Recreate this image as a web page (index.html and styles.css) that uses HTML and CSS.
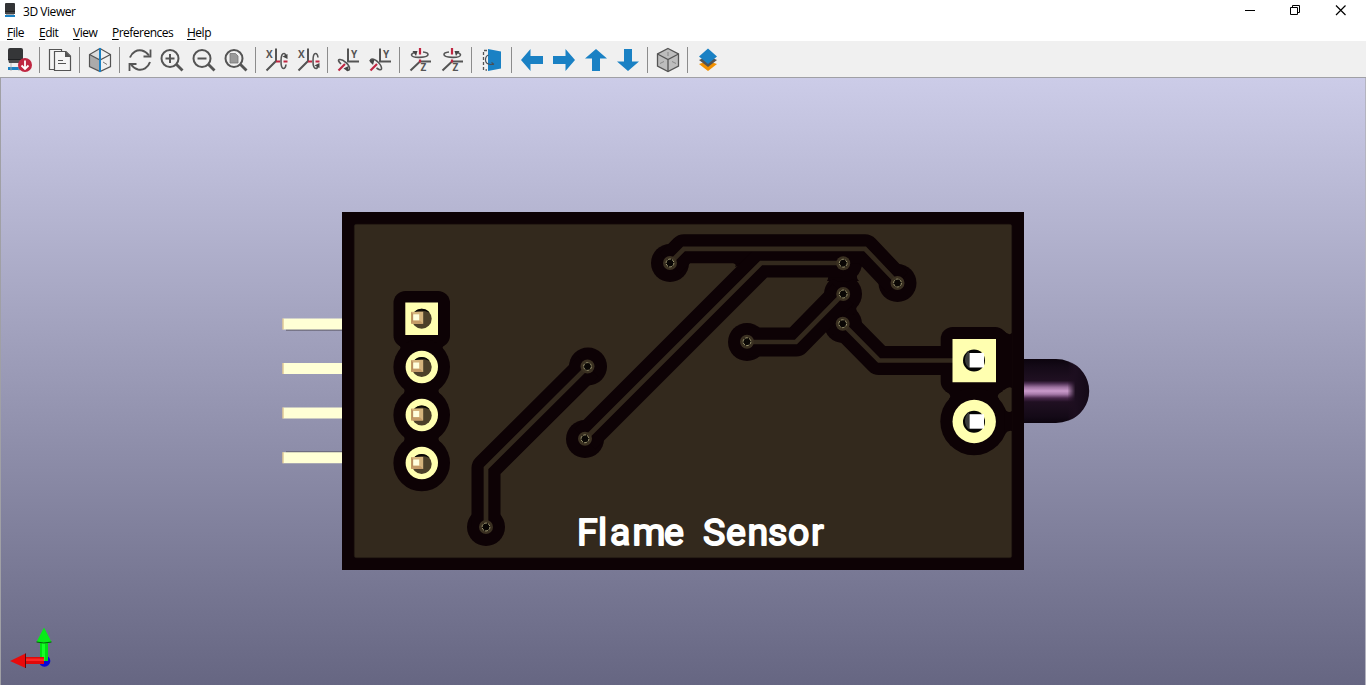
FILE: index.html
```html
<!DOCTYPE html>
<html lang="en">
<head>
<meta charset="utf-8">
<title>3D Viewer</title>
<link rel="stylesheet" href="styles.css">
</head>
<body>
<header class="titlebar">
  <svg class="app-icon" width="12" height="16" viewBox="0 0 12 16"><path d="M0 1q0-1 1-1h8q1 0 1 1v8H0z" fill="#333436"/><path d="M0 8h10v3H0z" fill="#444547"/><path d="M0 8.500h10" stroke="#1f2022"/><path d="M0 12h10v2H0z" fill="#1a81c4"/><path d="M1 11.500h8" stroke="#aaa"/></svg>
  <h1 class="title">3D Viewer</h1>
  <div class="window-controls">
    <svg width="46" height="20" viewBox="0 0 46 20"><path d="M20 10.500h10" stroke="#000"/></svg>
    <svg width="46" height="20" viewBox="0 0 46 20" fill="none" stroke="#000"><path d="M19.500 7.500h7v7h-7zM21.500 7.500v-2h7v7h-2"/></svg>
    <svg width="46" height="20" viewBox="0 0 46 20"><path d="M19 5.500l9.500 9.500M28.500 5.500L19 15" stroke="#000" stroke-width="1.200"/></svg>
  </div>
</header>
<nav class="menubar">
  <span><u>F</u>ile</span><span><u>E</u>dit</span><span><u>V</u>iew</span><span class="wide"><u>P</u>references</span><span><u>H</u>elp</span>
</nav>
<div class="toolbar">
  <svg class="tool" viewBox="0 0 32 32"><path d="M4 6q0-2 2-2h11q2 0 2 2v9H4z" fill="#353638"/><path d="M4 15h15l-1 4H5z" fill="#4a4b4d"/><path d="M4 15.500h15" stroke="#202123"/><path d="M4 23h15v3H4z" fill="#1a81c4"/><path d="M7 19v8M15 19v8" stroke="#aaa" stroke-width=".8"/><circle cx="21" cy="21" r="7" fill="#bf2641"/><path d="M21 16.500v8M17.500 21.500l3.500 3.500 3.500-3.500" fill="none" stroke="#fff" stroke-width="1.800"/></svg>
  <i class="sep"></i>
  <svg class="tool" viewBox="0 0 32 32"><path d="M11 25.500H5.500v-20h12V8" fill="#f5f5f5" stroke="#545454" stroke-width="1.200"/><path d="M10.500 7.500H22l4.500 4.500v14.500h-16z" fill="#f5f5f5" stroke="#545454" stroke-width="1.200"/><path d="M21 7l6 6h-6z" fill="#545454"/><path d="M14 16.500h5M14 19.500h8" stroke="#545454"/></svg>
  <i class="sep"></i>
  <svg class="tool" viewBox="0 0 32 32"><path d="M5.500 10.500L16 16v11.500L5.500 22.500z" fill="#ababab"/><path d="M5.500 10.500l10.500-6V16z" fill="#ddd"/><path d="M16 4.500l10.500 6v12L16 27.500l-10.500-5v-12zM5.500 10.500L16 16l10.500-5.500" fill="none" stroke="#545454" stroke-width="1.200"/><path d="M19 18l4 2.500" stroke="#777"/><path d="M16 4v24" stroke="#1a81c4" stroke-width="2"/></svg>
  <i class="sep"></i>
  <svg class="tool" viewBox="0 0 32 32" fill="none" stroke="#545454" stroke-width="2"><path d="M6 13.500C8 8 13 5.500 18 6.500q4 1 7 5M26 18c-2 6-7 8.500-12 7.500q-4-1-7-5"/><path d="M26.500 5.500v7h-7M5.500 27v-7h7" stroke-width="1.800"/></svg>
  <svg class="tool" viewBox="0 0 32 32" fill="none" stroke="#545454" stroke-width="2"><circle cx="14" cy="14.500" r="8.500"/><path d="M20.500 20.500l6 6" stroke-width="2.800"/><path d="M9.500 14.500h9M14 10v9"/></svg>
  <svg class="tool" viewBox="0 0 32 32" fill="none" stroke="#545454" stroke-width="2"><circle cx="14" cy="14.500" r="8.500"/><path d="M20.500 20.500l6 6" stroke-width="2.800"/><path d="M9.500 14.500h9"/></svg>
  <svg class="tool" viewBox="0 0 32 32" fill="none" stroke="#545454" stroke-width="2"><circle cx="14" cy="14.500" r="8.500"/><path d="M20.500 20.500l6 6" stroke-width="2.800"/><path d="M10 9.500h5.500l2.500 2.500v7h-8z" fill="#999" stroke="#777" stroke-width=".8"/></svg>
  <i class="sep"></i>
  <svg class="tool axis" viewBox="0 0 32 32"><path d="M16 4.500V17L6.500 26.500"/><path class="red" d="M16 17.500h4M23.500 17.500h4"/><path class="arc" d="M26 20.500q-.500 4-2.500 4-2.500 0-2.500-7.500t3-7.500q1.500 0 2 3"/><path class="head" d="M22.500 12.500l5-2.500v5z"/><text x="6" y="13.500">X</text></svg>
  <svg class="tool axis" viewBox="0 0 32 32"><path d="M16 4.500V17L6.500 26.500"/><path class="red" d="M16 17.500h4M23.500 17.500h4"/><path class="arc" d="M26 13.500q-.500-4-2.500-4-2.500 0-2.500 7.500t3 7.500q1.500 0 2-3"/><path class="head" d="M22.500 21.500l5-2.500v5z"/><text x="6" y="13.500">X</text></svg>
  <i class="sep"></i>
  <svg class="tool axis" viewBox="0 0 32 32"><path d="M16 4.500V17.500H27"/><path class="red" d="M13 20l-6.500 6.500"/><path class="arc" d="M9 20q-4-4-1.500-4.500C11 15 18 21 17.500 25q-.500 2-3 .5"/><path class="head" d="M11.500 24.500l5-2.500-.5 5.500z"/><text x="19" y="13.500">Y</text></svg>
  <svg class="tool axis" viewBox="0 0 32 32"><path d="M16 4.500V17.500H27"/><path class="red" d="M13 20l-6.500 6.500"/><path class="arc" d="M8 19q-3-3.500 0-4C12 15 18 21 17.500 25q-1 2-5-1"/><path class="head" d="M5 16.500l5.500-1-1.500 5.500z"/><text x="19" y="13.500">Y</text></svg>
  <i class="sep"></i>
  <svg class="tool axis" viewBox="0 0 32 32"><path d="M6.500 26.500l9.500-9H27"/><path class="red" d="M16 4v6.500M16 15.500v3"/><path class="arc" d="M19 8q5 .5 5 2.500c0 3.500-16 4-16.500.5q0-1.500 3-2.500"/><path class="head" d="M8.500 7h5l-1.500 5z"/><text x="16.500" y="27">Z</text></svg>
  <svg class="tool axis" viewBox="0 0 32 32"><path d="M6.500 26.500l9.500-9H27"/><path class="red" d="M16 4v6.500M16 15.500v3"/><path class="arc" d="M13 8q-5 .5-5 2.500c0 3.500 16 4 16.500.5q0-1.500-3-2.500"/><path class="head" d="M23.500 7h-5l1.500 5z"/><text x="16.500" y="27">Z</text></svg>
  <i class="sep"></i>
  <svg class="tool" viewBox="0 0 32 32"><path d="M11 6.500H7.500V26H11" fill="none" stroke="#545454" stroke-width="1.300" stroke-dasharray="3 2"/><path d="M12 5l13 2.500v17L12 27z" fill="#1a81c4"/><path d="M12.500 11q-3 1-3 5t5 4.500h3M15.500 18.500l2.500 2" fill="none" stroke="#4a4f55" stroke-width="1.200"/></svg>
  <i class="sep"></i>
  <svg class="tool" viewBox="0 0 32 32"><path d="M5 16L14.500 5v7H27v8H14.500v7z" fill="#1a81c4"/></svg>
  <svg class="tool" viewBox="0 0 32 32"><path d="M27 16L17.500 5v7H5v8h12.500v7z" fill="#1a81c4"/></svg>
  <svg class="tool" viewBox="0 0 32 32"><path d="M16 5L5 14.500h7V27h8V14.500h7z" fill="#1a81c4"/></svg>
  <svg class="tool" viewBox="0 0 32 32"><path d="M16 27L5 17.500h7V5h8v12.500h7z" fill="#1a81c4"/></svg>
  <i class="sep"></i>
  <svg class="tool" viewBox="0 0 32 32"><path d="M16 4.500l10.500 5.500v12L16 27.500 5.500 22V10z" fill="#bdbdbd" stroke="#545454" stroke-width="1.300"/><path d="M5.500 10L16 15.500 26.500 10M16 15.500v12" fill="none" stroke="#545454" stroke-width="1.300"/><path d="M16 8v4M8 19.500l4-2M24 19.500l-4-2" stroke="#888"/></svg>
  <i class="sep"></i>
  <svg class="tool" viewBox="0 0 32 32"><path d="M7 20l9-3 9 3-9 7z" fill="#f29100"/><path d="M7 16l9-4 9 4-9 7z" fill="#545454"/><path d="M7 12.500l9-8 9 8-9 7.500z" fill="#1a81c4"/></svg>
</div>
<main class="canvas">
<svg class="scene" width="1365" height="607" viewBox="1 78 1365 607">
  <defs>
    <linearGradient id="lens" x1="0" y1="0" x2="0" y2="1"><stop offset="0" stop-color="#0c040e"/><stop offset=".12" stop-color="#140a17"/><stop offset=".34" stop-color="#201022"/><stop offset=".38" stop-color="#4b2e50"/><stop offset=".44" stop-color="#9c729f"/><stop offset=".5" stop-color="#cb9bcc"/><stop offset=".55" stop-color="#a679a9"/><stop offset=".61" stop-color="#49284c"/><stop offset=".67" stop-color="#201022"/><stop offset=".9" stop-color="#140a17"/><stop offset="1" stop-color="#0c040e"/></linearGradient>
    <linearGradient id="dome"><stop offset="0" stop-color="#1e0e20" stop-opacity=".1"/><stop offset=".35" stop-color="#1c0e1f"/><stop offset="1" stop-color="#140917"/></linearGradient>
    <g id="pin"><circle r="10" fill="#4c4029"/><path d="M-8-6a10 10 0 0 1 16 0Q0-10-8-6z" fill="#090705"/><path d="M-10.500-7H1.500V5h-12z" fill="#d5b47c"/><path d="M-10.500 5v-12l2 2.500v7z" fill="#b88e5c"/><path d="M-10.500 5h12l-3-3h-7z" fill="#c49b67"/><path d="M-8.500-4.500h6v6h-6z" fill="#ffffdd"/></g>
    <g id="via"><circle r="7" fill="#3a3021"/><circle r="3.900" fill="#090604" stroke="#aaa47a" stroke-width=".9" stroke-dasharray="3 1"/></g>
    <g id="lead"><circle r="11" fill="#050505"/><path d="M-5-9.500a11 11 0 0 0 0 17z" fill="#393b3a"/><path d="M-4.500-7.500h14.500V7H-4.500z" fill="#fff"/></g>
    <g id="leg"><path d="M0-5.500h60v11H0z" fill="#ffffd5"/><path d="M0-5.500h1v11H0z" fill="#d1ad76"/></g>
  </defs>
  <path d="M1020 359h36a32.500 32 0 0 1 0 64h-36z" fill="url(#lens)"/>
  <path d="M1068 361a32.500 32 0 0 1 0 60z" fill="url(#dome)"/>
  <g stroke="#4e4a54"><path d="M286 330h57M286 452h57"/></g>
  <use href="#leg" x="282.500" y="324"/><use href="#leg" x="282.500" y="368.500"/><use href="#leg" x="282.500" y="413"/><use href="#leg" x="282.500" y="457.800"/>
  <path d="M342 212h682v358H342z" fill="#0d0205"/>
  <rect x="354.300" y="224.300" width="657.400" height="333.400" rx="2" fill="#33291d" stroke="#241b14" stroke-width=".7"/>
  <g fill="#0d0205">
    <rect x="393.500" y="291" width="56.500" height="56.500" rx="12"/>
    <circle cx="421.700" cy="367" r="28.300"/><circle cx="421.700" cy="415" r="28.300"/><circle cx="421.700" cy="463" r="28.300"/>
    <path d="M397 343q6 4 2 9h45q-4-5 2-9zM402 386q5 5 0 10h39q-5-5 0-10zM402 434q5 5 0 10h39q-5-5 0-10z"/>
    <rect x="940.700" y="327" width="66.500" height="66.500" rx="12"/><circle cx="974" cy="421.500" r="33.700"/>
    <path d="M945 391q8 4 4 8h50q-4-4 4-8zM1004 331q5 5 8 2v55q-3-2-8 2zM1004 408q4 6 8 3v20q-4-1-7 3z"/>
    <path d="M826 270q4 6 1 11h32q-4-4-1-10l7-9zM829 300v14h29q-3-4-1-10l2-5zM728 262q10 1 7 5l12-4z"/>
    <circle cx="670" cy="263" r="19"/><circle cx="897.500" cy="283" r="19"/><circle cx="843" cy="294" r="19"/><circle cx="843" cy="324" r="19"/><circle cx="747" cy="342" r="19"/><circle cx="588" cy="366.500" r="19"/><circle cx="585" cy="439" r="19"/><circle cx="486" cy="527" r="19"/><circle cx="843" cy="263" r="19"/>
  </g>
  <g id="tracks" fill="none" stroke-linejoin="round">
    <g stroke="#0d0205" stroke-width="29"><path d="M670 263l14-14.200h181l32.500 34.200"/><path d="M843 263h-82L585 439"/><path d="M747 342h49l47-48"/><path d="M843 324l36 36.500h95"/><path d="M588 366.500L486 468v59"/></g>
    <g stroke="#33291d" stroke-width="4.700" stroke-linejoin="miter"><path d="M670 263l14-14.200h181l32.500 34.200"/><path d="M843 263h-82L585 439"/><path d="M747 342h49l47-48"/><path d="M843 324l36 36.500h95"/><path d="M588 366.500L486 468v59"/></g>
  </g>
  <use href="#via" x="670" y="263"/><use href="#via" x="843.200" y="263.200"/><use href="#via" x="897.500" y="283"/><use href="#via" x="843.200" y="294"/><use href="#via" x="842.700" y="323.700"/><use href="#via" x="747" y="341.700"/><use href="#via" x="587.500" y="366.500"/><use href="#via" x="585" y="438.800"/><use href="#via" x="486" y="527"/>
  <g fill="#ffffb0"><path d="M405.300 302.500h32.700V335h-32.700zM952.500 339H996v43.300h-43.500z"/><circle cx="421.800" cy="367" r="16.200"/><circle cx="421.800" cy="415" r="16.200"/><circle cx="421.800" cy="463" r="16.200"/><circle cx="974.200" cy="421.500" r="21.700"/></g>
  <use href="#pin" x="421.700" y="318.800"/><use href="#pin" x="421.700" y="367"/><use href="#pin" x="421.700" y="415.500"/><use href="#pin" x="421.700" y="464"/>
  <use href="#lead" x="974" y="360.500"/><use href="#lead" x="974" y="421.700"/>
  <text class="silk" y="545.300" x="577 598 610 632.500 664 703 726 747.500 768 788 811">FlameSensor</text>
  <g>
    <circle cx="44.500" cy="661" r="5.800" fill="#0808d8"/>
    <path d="M40 642h8v19h-8z" fill="#00df12"/><path d="M42 642h3v19h-3z" fill="#15ff27"/><path d="M36.500 642L44 627.500l7.500 14.500q-7 2.500-15 0z" fill="#08eb18"/><path d="M36.500 642q7 2 15 0" fill="none" stroke="#075b0b"/>
    <path d="M25 657h19v7H25z" fill="#e00909"/><path d="M25 658.500h19v2.500H25z" fill="#ff2626"/><path d="M25.500 653.500L10 661l15.500 7z" fill="#e80b0b"/><path d="M25.500 653.500v14.500" stroke="#600909"/>
  </g>
</svg>
</main>
</body>
</html>
```
FILE: styles.css
```css
* { box-sizing: border-box; }
body {
  margin: 0;
  width: 1366px;
  height: 685px;
  overflow: hidden;
  display: flex;
  flex-direction: column;
  background: #fff;
  color: #000;
  font: 12px/16px "Open Sans", "Noto Sans", sans-serif;
}
.titlebar { height: 23px; display: flex; align-items: flex-start; padding-left: 5px; }
.app-icon { margin: 3px 6px 0 0; }
.title { margin: 4px 0 0; font-size: 12px; font-weight: 400; line-height: 16px; letter-spacing: -0.45px; }
.window-controls { display: flex; margin-left: auto; margin-right: 3px; }
.menubar {
  height: 18px;
  display: grid;
  grid-template-columns: 32px 34px 39px 75px 40px;
  padding: 2px 0 0 7px;
  letter-spacing: -0.5px;
}
.menubar .wide { letter-spacing: -0.52px; }
.menubar u { text-underline-offset: 1.5px; text-decoration-thickness: 1px; }
.toolbar {
  height: 37px;
  display: flex;
  align-items: center;
  padding-left: 4px;
  background: #f0f0f0;
  border-bottom: 1px solid #a0a0a5;
}
.tool { width: 32px; height: 32px; flex: none; margin-top: 2px; }
.sep { width: 8px; height: 26px; flex: none; margin-top: 2px; border-left: 3px solid transparent; background: linear-gradient(90deg, #8c8c8c 1px, transparent 1px) padding-box no-repeat; }
.axis { fill: none; stroke: #545454; stroke-width: 2; }
.axis .red { stroke: #bf2641; stroke-width: 2.2; }
.axis .arc { stroke-width: 1.6; }
.axis .head { fill: #454545; stroke: none; }
.axis text { fill: #545454; stroke: none; font: 700 10px "Open Sans", sans-serif; }
.canvas {
  flex: 1;
  border-left: 1px solid #a0a0a5;
  border-right: 1px solid #b4b4c0;
  background: linear-gradient(#cccce8, #666682);
}
.scene { display: block; }
.silk {
  fill: #fff;
  stroke: #fff;
  stroke-width: 1.8;
  stroke-linejoin: round;
  font: 400 37.5px Roboto, sans-serif;
}
```
